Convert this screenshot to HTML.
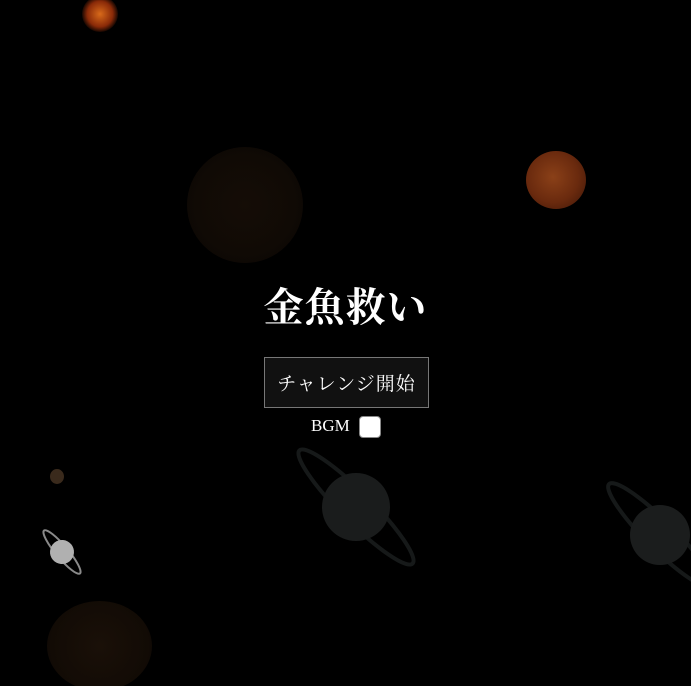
<!DOCTYPE html>
<html><head><meta charset="utf-8"><style>
html,body{margin:0;padding:0;background:#000;width:691px;height:686px;overflow:hidden;position:relative}
.p{position:absolute;border-radius:50%}
h1{position:absolute;left:0;width:691px;top:276px;margin:0;text-align:center;color:#fff;font:bold 40px "Liberation Serif","Noto Serif CJK SC","Noto Sans CJK JP",serif;letter-spacing:1px}
.btn{position:absolute;left:264px;top:357px;width:163px;height:49px;background:#111;border:1px solid #777;color:#fff;font:19px "Liberation Serif","Noto Serif CJK SC",serif;display:flex;align-items:center;justify-content:center;letter-spacing:1px}
.bgm{position:absolute;left:311px;top:416px;color:#fff;font:17px "Liberation Serif",serif}
.cb{position:absolute;left:359px;top:416px;width:20px;height:20px;background:#fff;border-radius:4px;border:1px solid #888}
</style></head><body>
<div class="p" style="left:82px;top:-4px;width:36px;height:36px;background:radial-gradient(circle,#d86a1a 0%,#8a2a08 50%,rgba(60,10,0,0) 75%)"></div>
<div class="p" style="left:187px;top:147px;width:116px;height:116px;background:radial-gradient(circle,#150d06 0%,#100a05 60%,#070403 100%)"></div>
<div class="p" style="left:526px;top:151px;width:60px;height:58px;background:radial-gradient(circle at 45% 45%,#8a4018 0%,#6a2a0e 55%,#3a1406 100%)"></div>
<div class="p" style="left:50px;top:469px;width:14px;height:15px;background:#3a2a1c"></div>
<div class="p" style="left:47px;top:601px;width:105px;height:90px;background:radial-gradient(circle,#1a1008 0%,#120b05 70%,#080503 100%)"></div>
<svg width="691" height="686" style="position:absolute;left:0;top:0">
<g transform="translate(62,552) rotate(50)"><ellipse rx="28" ry="6" fill="none" stroke="#8a8a8a" stroke-width="2"/><circle r="12" fill="#b0b0b0"/></g>
<g transform="translate(356,507) rotate(45)"><ellipse rx="80" ry="15" fill="none" stroke="#161919" stroke-width="4"/><circle r="34" fill="#1a1c1c"/></g>
<g transform="translate(660,535) rotate(45)"><ellipse rx="72" ry="14" fill="none" stroke="#161919" stroke-width="4"/><circle r="30" fill="#1b1d1d"/></g>
</svg>
<h1>金魚救い</h1>
<div class="btn">チャレンジ開始</div>
<div class="bgm">BGM</div>
<div class="cb"></div>
</body></html>
